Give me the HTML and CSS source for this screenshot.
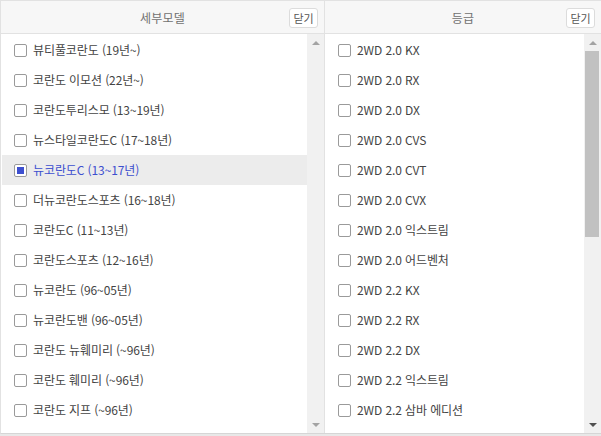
FILE: index.html
```html
<!DOCTYPE html>
<html lang="ko">
<head>
<meta charset="utf-8">
<link rel="stylesheet" href="styles.css">
</head>
<body>
<div class="picker">
  <section class="panel panel-left">
    <header class="panel-head">
      <span class="panel-title">세부모델</span>
      <button class="close-btn">닫기</button>
    </header>
    <div class="panel-body">
      <ul class="list">
        <li class="item"><span class="cb"></span><span class="label">뷰티풀코란도 (19년~)</span></li>
        <li class="item"><span class="cb"></span><span class="label">코란도 이모션 (22년~)</span></li>
        <li class="item"><span class="cb"></span><span class="label">코란도투리스모 (13~19년)</span></li>
        <li class="item"><span class="cb"></span><span class="label">뉴스타일코란도C (17~18년)</span></li>
        <li class="item selected"><span class="cb checked"></span><span class="label">뉴코란도C (13~17년)</span></li>
        <li class="item"><span class="cb"></span><span class="label">더뉴코란도스포츠 (16~18년)</span></li>
        <li class="item"><span class="cb"></span><span class="label">코란도C (11~13년)</span></li>
        <li class="item"><span class="cb"></span><span class="label">코란도스포츠 (12~16년)</span></li>
        <li class="item"><span class="cb"></span><span class="label">뉴코란도 (96~05년)</span></li>
        <li class="item"><span class="cb"></span><span class="label">뉴코란도밴 (96~05년)</span></li>
        <li class="item"><span class="cb"></span><span class="label">코란도 뉴훼미리 (~96년)</span></li>
        <li class="item"><span class="cb"></span><span class="label">코란도 훼미리 (~96년)</span></li>
        <li class="item"><span class="cb"></span><span class="label">코란도 지프 (~96년)</span></li>
      </ul>
      <div class="scrollbar">
        <div class="sb-btn"><span class="arrow-up light"></span></div>
        <div class="sb-track"></div>
        <div class="sb-btn"><span class="arrow-down light"></span></div>
      </div>
    </div>
  </section>
  <section class="panel panel-right">
    <header class="panel-head">
      <span class="panel-title">등급</span>
      <button class="close-btn">닫기</button>
    </header>
    <div class="panel-body">
      <ul class="list">
        <li class="item"><span class="cb"></span><span class="label">2WD 2.0 KX</span></li>
        <li class="item"><span class="cb"></span><span class="label">2WD 2.0 RX</span></li>
        <li class="item"><span class="cb"></span><span class="label">2WD 2.0 DX</span></li>
        <li class="item"><span class="cb"></span><span class="label">2WD 2.0 CVS</span></li>
        <li class="item"><span class="cb"></span><span class="label">2WD 2.0 CVT</span></li>
        <li class="item"><span class="cb"></span><span class="label">2WD 2.0 CVX</span></li>
        <li class="item"><span class="cb"></span><span class="label">2WD 2.0 익스트림</span></li>
        <li class="item"><span class="cb"></span><span class="label">2WD 2.0 어드벤처</span></li>
        <li class="item"><span class="cb"></span><span class="label">2WD 2.2 KX</span></li>
        <li class="item"><span class="cb"></span><span class="label">2WD 2.2 RX</span></li>
        <li class="item"><span class="cb"></span><span class="label">2WD 2.2 DX</span></li>
        <li class="item"><span class="cb"></span><span class="label">2WD 2.2 익스트림</span></li>
        <li class="item"><span class="cb"></span><span class="label">2WD 2.2 삼바 에디션</span></li>
      </ul>
      <div class="scrollbar">
        <div class="sb-btn"><span class="arrow-up light"></span></div>
        <div class="sb-track"><div class="sb-thumb"></div></div>
        <div class="sb-btn"><span class="arrow-down dark"></span></div>
      </div>
    </div>
  </section>
</div>
</body>
</html>
```

FILE: styles.css
```css
* { box-sizing: border-box; }
html, body { margin: 0; padding: 0; }
body {
  background: #e8e8e8;
  font-family: "Noto Sans CJK KR", "Noto Sans", sans-serif;
  font-size: 12px;
  color: #444;
  width: 601px;
  height: 436px;
  overflow: hidden;
}
.picker {
  display: flex;
  width: 601px;
  height: 434px;
  background: #fff;
  border-top: 1px solid #e2e2e2;
  border-left: 1px solid #e2e2e2;
  border-bottom: 1px solid #d6d6d6;
}
.panel {
  display: flex;
  flex-direction: column;
  min-width: 0;
}
.panel-left { width: 324px; border-right: 1px solid #e2e2e2; }
.panel-right { flex: 1; }
.panel-head {
  height: 33px;
  flex: none;
  background: #f7f7f7;
  border-bottom: 1px solid #e2e2e2;
  display: grid;
  grid-template-columns: 1fr auto 1fr;
  align-items: center;
  padding: 0 6px 0 0;
}
.panel-title {
  grid-column: 2;
  font-size: 12px;
  color: #707070;
  letter-spacing: 0.2px;
  margin-right: -6px;
}
.close-btn {
  grid-column: 3;
  justify-self: end;
  height: 20px;
  width: 29px;
  padding: 0;
  margin-top: 1px;
  border: 1px solid #dcdcdc;
  border-radius: 3px;
  background: #fff;
  font-family: inherit;
  font-size: 11px;
  color: #555;
  line-height: 18px;
}
.panel-body {
  flex: 1;
  display: flex;
  min-height: 0;
}
.list {
  flex: 1;
  list-style: none;
  margin: 0;
  padding: 1px 0 0 1px;
  overflow: hidden;
}
.item {
  height: 30px;
  display: flex;
  align-items: center;
  padding-left: 12px;
  white-space: nowrap;
}
.panel-right .item { padding-left: 12px; }
.item.selected { background: #ececec; color: #3d4fcf; }
.cb {
  width: 13px;
  height: 13px;
  border: 1px solid #9a9a9a;
  border-radius: 2px;
  background: #fff;
  margin-right: 6px;
  flex: none;
  display: flex;
  align-items: center;
  justify-content: center;
}
.cb.checked::after {
  content: "";
  width: 7px;
  height: 7px;
  background: #3d4fcf;
}
.label { line-height: 16px; letter-spacing: -0.1px; }
.scrollbar {
  width: 17px;
  flex: none;
  display: flex;
  flex-direction: column;
  background: #f1f1f1;
}
.sb-btn {
  height: 17px;
  flex: none;
  display: flex;
  align-items: center;
  justify-content: center;
}
.sb-track { flex: 1; padding: 0 2px 0 1px; }
.sb-thumb { height: 186px; background: #c1c1c1; }
.arrow-up, .arrow-down {
  width: 0; height: 0;
  border-left: 4px solid transparent;
  border-right: 4px solid transparent;
}
.arrow-up { border-bottom: 4px solid #a3a3a3; }
.arrow-down { border-top: 4px solid #a3a3a3; }
.arrow-down.dark { border-top-color: #505050; }
```
